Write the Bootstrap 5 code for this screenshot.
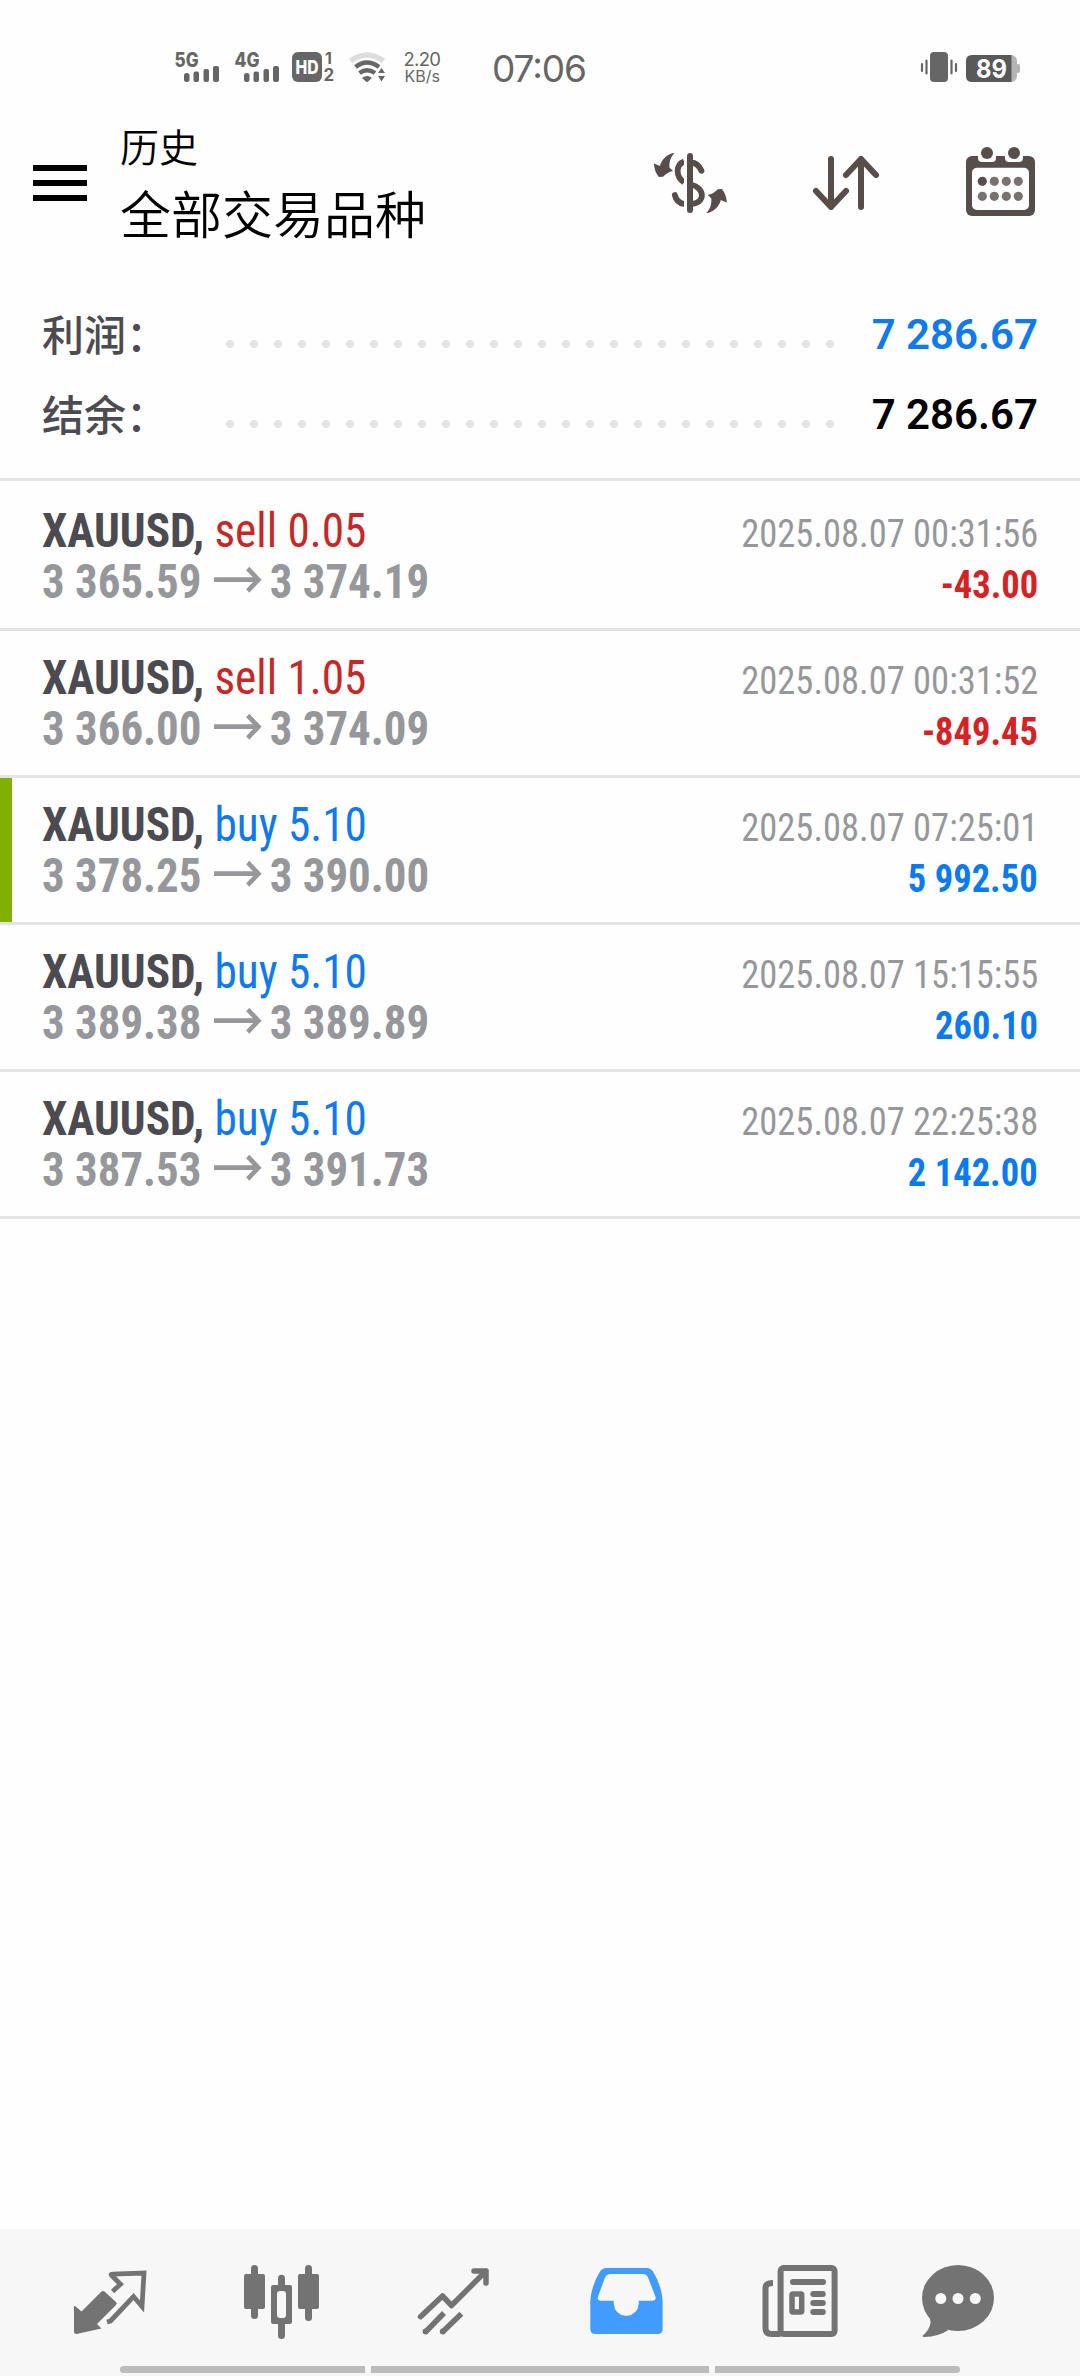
<!DOCTYPE html>
<html lang="zh-CN">
<head>
<meta charset="utf-8">
<meta name="viewport" content="width=device-width, initial-scale=1">
<title>历史</title>
<link href="https://cdn.jsdelivr.net/npm/bootstrap@5.3.0/dist/css/bootstrap.min.css" rel="stylesheet">
<style>
body{background:#fefefe;font-family:Roboto,"Noto Sans CJK SC",sans-serif;color:#000;width:1080px;height:2376px;overflow:hidden}
svg{display:block;flex:none}
.statusbar{height:112px}
.apphead{height:183px;padding:6px 41px 0 33px}
.titles{margin:-3px 0 0 33px;font-family:"Noto Sans CJK SC",sans-serif;font-weight:350}
.t-sub{font-size:39px;line-height:60px}
.t-main{font-size:51px;line-height:72px;margin-top:1px}
.summary{padding:0 42px 23px 42px;border-bottom:3px solid #e4e4e4}
.sumrow{height:80px;line-height:80px;font-size:42px}
.sumlabel{width:176px;margin-top:-5px;color:#4c4b51;font-family:"Noto Sans CJK SC",sans-serif;font-weight:500}
.leader{width:624px;height:8px;margin-top:17px;background:radial-gradient(circle at 12px 4px,#e4e4e4 3.7px,transparent 4.3px) 0 0/24px 8px repeat-x}
.sumval{font-weight:600}
.deal{border-bottom:3px solid #e4e4e4;padding:21px 42px;position:relative}
.deal:first-child{padding-top:24px}
.dline{height:51px;line-height:51px;white-space:nowrap}
.cond{font-family:"Roboto Condensed",Roboto,sans-serif;font-stretch:75%}
.big{font-size:48px;transform:scaleX(.943);transform-origin:0 50%}
.big.px{transform:scaleX(.935)}
.sml{font-size:39px;transform:scaleX(.936);transform-origin:100% 50%}
.sym{color:#4c4b51;font-weight:700}
.gry{color:#96979b}
.px{font-weight:700}
.c-sell{color:#c62828}.c-loss{color:#d52224;font-weight:700}
.c-buy{color:#0f7aeb}.c-gain{color:#0a7af0;font-weight:700}
.marked::before{content:"";position:absolute;left:0;top:0;bottom:0;width:12px;background:#80b000}
.tabs{height:147px;background:#f7f7f7;padding:24px 24px 0}
.tabs a{width:172px;color:#737373}
.tabs .on{color:#429cff}
.gesture{gap:6px;height:7px;margin-top:17px}
.gesture span{background:#bcbcbc;width:245px}
.gesture span:nth-child(2){width:338px}
</style>
</head>
<body class="d-flex flex-column m-0">
<div class="statusbar">
<svg width="1080" height="112" viewBox="0 0 1080 112" fill="#666" font-family="Inter,sans-serif">
<text x="174.500" y="66.500" font-size="19.500" font-weight="800" textLength="24" lengthAdjust="spacingAndGlyphs">5G</text>
<g id="bars"><rect x="184" y="73" width="5.500" height="9" rx="2.500"/><rect x="193.500" y="71.500" width="5.500" height="10.500" rx="2"/><rect x="203.500" y="69" width="5.500" height="13" rx="2"/><rect x="213" y="66" width="6" height="16" rx="2"/></g>
<text x="234.500" y="66.500" font-size="19.500" font-weight="800" textLength="25" lengthAdjust="spacingAndGlyphs">4G</text>
<use href="#bars" x="60"/>
<rect x="292" y="52" width="30" height="30" rx="6"/>
<text x="295.500" y="73.500" font-size="19" font-weight="800" fill="#fff" textLength="23" lengthAdjust="spacingAndGlyphs">HD</text>
<text x="325" y="64" font-size="16" font-weight="700">1</text>
<text x="323.500" y="81" font-size="17" font-weight="700">2</text>
<g fill="none"><path d="M350.500 61Q367 49 383.500 61" stroke="#ddd" stroke-width="5.500"/><path d="M355.500 67Q367 58 379 67" stroke="#666" stroke-width="4.500"/><path d="M359.500 73Q367 67.500 375 73" stroke="#666" stroke-width="4.500"/></g>
<path d="M362 78Q367 74 372 78L368 81.500Q367 82.500 366 81.500ZM378 73l3.500-5 3.500 5ZM378 76h7l-3.500 5.500Z"/>
<text x="403.500" y="66" font-size="18.500" textLength="37.500">2.20</text>
<text x="404.500" y="81.500" font-size="15.500" textLength="35.500" lengthAdjust="spacingAndGlyphs">KB/s</text>
<text x="492" y="82" font-size="37" textLength="95">07:06</text>
<rect x="930" y="52" width="18" height="30" rx="4"/>
<path d="M926.500 60.500v13M951.500 60.500v13M922 64v7M956 64v7" stroke="#666" stroke-width="2.200" stroke-linecap="round"/>
<rect x="970" y="55" width="47" height="27" rx="6" fill="#b4b4b4"/><rect x="1016" y="64" width="4" height="9" rx="2" fill="#b4b4b4"/>
<path d="M972 55h39.500v27H972q-6 0-6-6V61q0-6 6-6Z" fill="#595959"/>
<text x="976" y="78.300" font-size="26" font-weight="700" fill="#fff" textLength="31" lengthAdjust="spacingAndGlyphs">89</text>
</svg>
</div>

<header class="apphead d-flex align-items-start">
<svg width="54" height="132" viewBox="33 118 54 132"><path d="M33 168h54M33 183h54M33 198h54" stroke="#000" stroke-width="6"/></svg>
<div class="titles me-auto"><div class="t-sub">历史</div><div class="t-main">全部交易品种</div></div>
<svg width="387" height="132" viewBox="652 118 387 132" fill="#574d4a" stroke-linecap="round" stroke-linejoin="round">
<g fill="none" stroke="#574d4a" stroke-width="5.800"><path d="M684 161.500C675.500 165 675.500 176 684 182.500" stroke-linecap="butt"/><path d="M691 162.500Q698 163 701.500 170.800M691 184.500C705 187.500 706 203.500 691 203.800"/><path d="M674.800 195Q676.500 202.500 684 204" /></g>
<path d="M684 156v54h4v-54z" fill="#fefefe"/>
<rect x="687" y="153" width="6" height="60" rx="3"/>
<path id="sw" d="M674.700 153C668 153 661 160 660 166L654 163.500C654 169 656.500 174.500 659 177L663 176.700C666 174 669 171.500 673 171L669.500 167.500C669 161 671 156.500 674.700 153Z"/>
<use href="#sw" transform="rotate(180 690.400 183)"/>
<path d="M831 159v48M816 191l15 16 15-16M861 207v-48M846 175l15-16 15 16" fill="none" stroke="#574d4a" stroke-width="6"/>
<rect x="966" y="156" width="69" height="60" rx="6"/><rect x="972" y="167.700" width="57" height="42.300" rx="5" fill="#fefefe"/>
<path d="M978 155v3q0 4 4 4h10q4 0 4-4v-3zM1005 155v3q0 4 4 4h10q4 0 4-4v-3z" fill="#fefefe"/>
<circle cx="987" cy="153" r="6"/><circle cx="1014" cy="153" r="6"/>
<circle cx="982.300" cy="181.300" r="4.600"/>
<g fill="#79726e"><circle cx="994.300" cy="181.300" r="4.600"/><circle cx="1006.300" cy="181.300" r="4.600"/><circle cx="1018.300" cy="181.300" r="4.600"/><circle cx="982.300" cy="196.300" r="4.600"/><circle cx="994.300" cy="196.300" r="4.600"/><circle cx="1006.300" cy="196.300" r="4.600"/><circle cx="1018.300" cy="196.300" r="4.600"/></g>
</svg>
</header>

<section class="summary">
<div class="sumrow d-flex align-items-center"><span class="sumlabel">利润：</span><span class="leader"></span><span class="sumval ms-auto c-buy">7 286.67</span></div>
<div class="sumrow d-flex align-items-center"><span class="sumlabel">结余：</span><span class="leader"></span><span class="sumval ms-auto">7 286.67</span></div>
</section>

<main id="deals" class="flex-grow-1">
<article class="deal cond"><div class="dline d-flex justify-content-between align-items-baseline"><span class="big"><span class="sym">XAUUSD,</span> <span class="c-sell">sell 0.05</span></span><span class="sml gry">2025.08.07 00:31:56</span></div><div class="dline d-flex justify-content-between align-items-baseline"><span class="big gry px d-flex"><span>3 365.59</span><svg width="73" height="51" viewBox="0 0 73 51"><path d="M13 23.700H60M49 12.500 60.500 23.700 49 35" fill="none" stroke="#96979b" stroke-width="4.700"/></svg><span>3 374.19</span></span><span class="sml c-loss">-43.00</span></div></article>
<article class="deal cond"><div class="dline d-flex justify-content-between align-items-baseline"><span class="big"><span class="sym">XAUUSD,</span> <span class="c-sell">sell 1.05</span></span><span class="sml gry">2025.08.07 00:31:52</span></div><div class="dline d-flex justify-content-between align-items-baseline"><span class="big gry px d-flex"><span>3 366.00</span><svg width="73" height="51" viewBox="0 0 73 51"><path d="M13 23.700H60M49 12.500 60.500 23.700 49 35" fill="none" stroke="#96979b" stroke-width="4.700"/></svg><span>3 374.09</span></span><span class="sml c-loss">-849.45</span></div></article>
<article class="deal cond marked"><div class="dline d-flex justify-content-between align-items-baseline"><span class="big"><span class="sym">XAUUSD,</span> <span class="c-buy">buy 5.10</span></span><span class="sml gry">2025.08.07 07:25:01</span></div><div class="dline d-flex justify-content-between align-items-baseline"><span class="big gry px d-flex"><span>3 378.25</span><svg width="73" height="51" viewBox="0 0 73 51"><path d="M13 23.700H60M49 12.500 60.500 23.700 49 35" fill="none" stroke="#96979b" stroke-width="4.700"/></svg><span>3 390.00</span></span><span class="sml c-gain">5 992.50</span></div></article>
<article class="deal cond"><div class="dline d-flex justify-content-between align-items-baseline"><span class="big"><span class="sym">XAUUSD,</span> <span class="c-buy">buy 5.10</span></span><span class="sml gry">2025.08.07 15:15:55</span></div><div class="dline d-flex justify-content-between align-items-baseline"><span class="big gry px d-flex"><span>3 389.38</span><svg width="73" height="51" viewBox="0 0 73 51"><path d="M13 23.700H60M49 12.500 60.500 23.700 49 35" fill="none" stroke="#96979b" stroke-width="4.700"/></svg><span>3 389.89</span></span><span class="sml c-gain">260.10</span></div></article>
<article class="deal cond"><div class="dline d-flex justify-content-between align-items-baseline"><span class="big"><span class="sym">XAUUSD,</span> <span class="c-buy">buy 5.10</span></span><span class="sml gry">2025.08.07 22:25:38</span></div><div class="dline d-flex justify-content-between align-items-baseline"><span class="big gry px d-flex"><span>3 387.53</span><svg width="73" height="51" viewBox="0 0 73 51"><path d="M13 23.700H60M49 12.500 60.500 23.700 49 35" fill="none" stroke="#96979b" stroke-width="4.700"/></svg><span>3 391.73</span></span><span class="sml c-gain">2 142.00</span></div></article>
</main>

<nav class="tabs">
<div class="d-flex">
<a class="d-flex justify-content-center"><svg width="96" height="96" viewBox="62 2253 96 96"><path d="M75 2306l6.500 5.500 20-20q1.500-1 3 0L116 2302q1.500 1.500 0 3L97 2324l4.500 4.500-25 5.500q-2.500 0-2.500-2V2306z" fill="currentColor"/><path d="M112.500 2291.500l8-7.300-9-9q-1-1 1-1L144 2273l-2 33.500-8.500-10-23 24.500-3.500 1" fill="none" stroke="currentColor" stroke-width="4.800"/></svg></a>
<a class="d-flex justify-content-center"><svg width="96" height="96" viewBox="234 2253 96 96" fill="currentColor"><rect x="251" y="2265" width="7" height="54" rx="3.500"/><rect x="244" y="2274" width="21" height="35" rx="2"/><rect x="278" y="2274.700" width="7" height="64.300" rx="3.500"/><rect x="271" y="2285" width="21" height="39" rx="2"/><rect x="277" y="2291" width="9" height="27" rx="3" fill="#f7f7f7"/><rect x="305" y="2265" width="7" height="56" rx="3.500"/><rect x="298" y="2274" width="21" height="35" rx="2"/></svg></a>
<a class="d-flex justify-content-center"><svg width="96" height="96" viewBox="406 2253 96 96" fill="none" stroke="currentColor" stroke-width="5.500"><path d="M420.500 2316.700 442.500 2296l9 9.500L486 2271M474 2271h12v12" stroke-linecap="round" stroke-linejoin="round"/><path d="M425 2332.500 444 2313M442 2332.500 461.400 2313.700"/><g fill="currentColor" stroke="none"><circle cx="425.500" cy="2331.500" r="2.900"/><circle cx="442.700" cy="2331.500" r="2.900"/></g></svg></a>
<a class="d-flex justify-content-center on"><svg width="96" height="96" viewBox="578 2253 96 96"><path fill="currentColor" fill-rule="evenodd" d="M590.300 2300Q592 2284 600 2271.500 602.500 2268 606 2268H647Q650.500 2268 653 2271.500 661 2284 662.600 2300V2329q0 5-5 5H595.300q-5 0-5-5ZM600 2300.700h13.700v3q1 11 12.500 12.300 11.500-1.300 12.600-12.300v-3H653q3.500-.7 2.500-4L648 2277.500Q646.500 2274 643 2274H610.500Q606.500 2274 605 2277.500L598 2296.700q-1 3.300 2 4Z"/></svg></a>
<a class="d-flex justify-content-center"><svg width="96" height="96" viewBox="750 2253 96 96" fill="none" stroke="currentColor" stroke-width="6"><rect x="780.600" y="2268" width="54" height="66" rx="3"/><path d="M773 2283q-7.500 0-7.500 5v40q0 6 6 6h9"/><g fill="currentColor" stroke="none"><rect x="790" y="2279" width="36" height="6" rx="3"/><rect x="810.300" y="2291" width="15.500" height="6" rx="3"/><rect x="810.300" y="2300" width="15.500" height="6" rx="3"/><rect x="810.300" y="2309" width="15.500" height="6" rx="3"/></g><rect x="792" y="2294" width="9.700" height="18" rx="1" stroke-width="5.500"/></svg></a>
<a class="d-flex justify-content-center"><svg width="96" height="96" viewBox="922 2253 96 96"><g fill="currentColor"><ellipse cx="958" cy="2298" rx="36" ry="33"/><path d="M928 2316q3 2 2.500 7-1 6-6 11-4 3 0 3 14-.5 24-7z"/></g><g fill="#f7f7f7"><circle cx="940.800" cy="2298.500" r="5.500"/><circle cx="958" cy="2298.500" r="5.500"/><circle cx="975.300" cy="2298.500" r="5.500"/></g></svg></a>
</div>
<div class="gesture d-flex justify-content-center"><span class="rounded-start-pill"></span><span></span><span class="rounded-end-pill"></span></div>
</nav>
<script src="https://cdn.jsdelivr.net/npm/bootstrap@5.3.0/dist/js/bootstrap.bundle.min.js"></script>
</body>
</html>
